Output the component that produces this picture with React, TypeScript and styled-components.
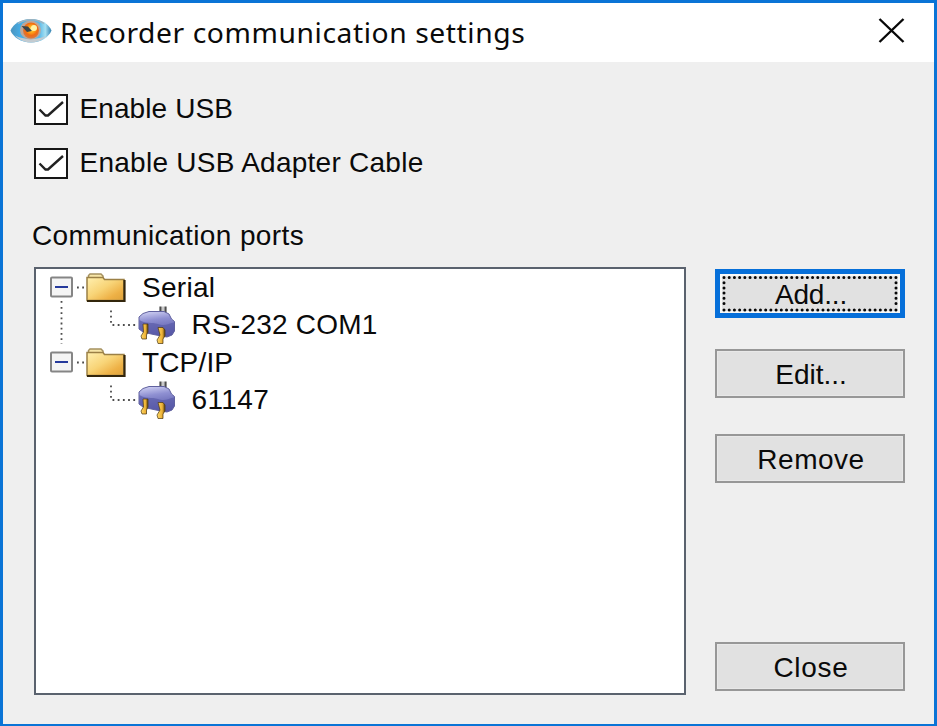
import React from 'react';
import styled, { createGlobalStyle } from 'styled-components';

const GlobalStyle = createGlobalStyle`
  *, *::before, *::after { box-sizing: border-box; }
  body { margin: 0; overflow: hidden; }
`;

const Dialog = styled.main`
  display: flex;
  flex-direction: column;
  width: 937px;
  height: 726px;
  border: solid #0a74d6;
  border-width: 3px 3px 2px 3px;
  background: #efefef;
  color: #0a0a0a;
  font: 28px/32px "Liberation Sans", Arial, sans-serif;
`;

const TitleBar = styled.header`
  display: flex;
  align-items: center;
  flex: none;
  height: 59px;
  padding: 0 29px 4px 7px;
  background: #fff;
`;

const Title = styled.h1`
  flex: 1;
  margin: 5px 0 0 7.5px;
  font: 400 27px/36px "Noto Sans", "Open Sans", sans-serif;
  letter-spacing: 0.55px;
  white-space: nowrap;
  transform: scaleX(1.046);
  transform-origin: left center;
`;

const CloseIcon = styled.button`
  display: flex;
  padding: 0;
  border: 0;
  background: none;
`;

const Options = styled.section`
  display: flex;
  flex-direction: column;
  gap: 22px;
  padding: 31px 0 0 31px;
`;

const Option = styled.label`
  display: flex;
  align-items: center;
  height: 32px;
  gap: 11.5px;
`;

const OptionText = styled.span<{ $spacing?: number }>`
  letter-spacing: ${(p) => p.$spacing ?? 0}px;
  white-space: nowrap;
`;

const GroupLabel = styled.h2`
  margin: 41px 0 0 29px;
  font: inherit;
  letter-spacing: 0.4px;
`;

const PortsArea = styled.section`
  display: flex;
  gap: 29px;
  margin: 15px 0 0 31px;
  height: 428px;
`;

const Tree = styled.div`
  width: 652px;
  height: 428px;
  border: 2px solid #5a626e;
  background: #fff;
`;

const TreeRow = styled.div`
  display: flex;
  align-items: center;
  height: 37.5px;
`;

const TreeText = styled.span<{ $spacing?: number }>`
  margin-left: 16px;
  letter-spacing: ${(p) => p.$spacing ?? 0}px;
  white-space: nowrap;
`;

const Guide = styled.svg`
  flex: none;
  display: block;
`;

const Buttons = styled.div`
  display: flex;
  flex-direction: column;
  width: 190px;
  padding: 2px 0 4px;
`;

const Button = styled.button<{ $focused?: boolean; $gap?: number; $last?: boolean; $spacing?: number }>`
  position: relative;
  width: 190px;
  height: 49px;
  padding: 3px 0 0 2px;
  margin-top: ${(p) => (p.$last ? 'auto' : `${p.$gap ?? 0}px`)};
  border: ${(p) => (p.$focused ? '5px solid #066fd9' : '2px solid #979797')};
  box-shadow: inset 0 0 0 ${(p) => (p.$focused ? '2px #f8f8f6' : '1px #e8e8e8')};
  background: #e1e1e1;
  color: inherit;
  font: inherit;
  letter-spacing: ${(p) => p.$spacing ?? 0}px;
`;

const FocusRing = styled.svg`
  position: absolute;
  inset: 0;
`;

const EyeLogo = () => (
  <svg width="42" height="26" viewBox="0 0 42 26">
    <defs>
      <linearGradient id="eye" x1="0" y1="0" x2="1" y2="0">
        <stop offset="0" stopColor="#4b93bd" />
        <stop offset="0.25" stopColor="#45aee8" />
        <stop offset="0.7" stopColor="#5ab9e8" />
        <stop offset="0.85" stopColor="#a5e0f2" />
        <stop offset="1" stopColor="#2f7fb0" />
      </linearGradient>
      <radialGradient id="iris" cx="0.52" cy="0.42" r="0.55">
        <stop offset="0" stopColor="#fff6a0" />
        <stop offset="0.3" stopColor="#ffb31c" />
        <stop offset="0.7" stopColor="#f36a10" />
        <stop offset="1" stopColor="#d8783f" />
      </radialGradient>
    </defs>
    <path d="M0.5 12.500 C3 6 11 1 21 1 C31 1 39 6 41.5 12.500 C39 19 31 24.500 21 24.500 C11 24.500 3 19 0.500 12.500Z" fill="url(#eye)" />
    <path d="M5 17.500 C13 22 29 22 37 17.500 C32 22.500 27 24.500 21 24.500 C15 24.500 9 22 5 17.500Z" fill="#c3cbd0" />
    <path d="M8 5.500 C15 0.500 27 0.500 34 5.500" fill="none" stroke="#9fb3bf" strokeWidth="1.500" />
    <ellipse cx="20.500" cy="12" rx="10.500" ry="9.500" fill="#bba79b" />
    <circle cx="21" cy="12.500" r="8" fill="url(#iris)" />
    <path d="M11.500 8 L18 8.500 L22 13 L17 14Z" fill="#39444a" />
    <circle cx="24" cy="10" r="3" fill="#fff3a6" />
  </svg>
);

const Checkbox = () => (
  <svg width="34" height="31" viewBox="0 0 34 31">
    <rect x="1" y="1" width="32" height="29" fill="#fff" stroke="#161616" strokeWidth="2" />
    <path d="M5.500 15.500 L11.500 21.500 H14 L29 8" fill="none" stroke="#222" strokeWidth="2.400" />
  </svg>
);

const FolderIcon = () => (
  <svg width="40" height="30" viewBox="0 0 40 30">
    <defs>
      <linearGradient id="folder" x1="0" y1="0" x2="1" y2="1">
        <stop offset="0" stopColor="#fff0b0" />
        <stop offset="0.45" stopColor="#f8d477" />
        <stop offset="0.75" stopColor="#eeb146" />
        <stop offset="1" stopColor="#dda13a" />
      </linearGradient>
    </defs>
    <path d="M2.500 5 V2.500 L4 1 H15 L17 3 V5" fill="#f7e6a8" stroke="#a59160" strokeWidth="1.500" />
    <path d="M1 4.500 H17 L18.500 6.500 H38 V27.500 H1Z" fill="url(#folder)" stroke="#9b8046" strokeWidth="1.500" />
    <path d="M1 28 H38.500 V7" fill="none" stroke="#33260c" strokeWidth="2.200" />
  </svg>
);

const PlugIcon = () => (
  <svg width="38" height="38" viewBox="0 0 38 38">
    <defs>
      <linearGradient id="plug" x1="0.200" y1="0" x2="0.400" y2="1">
        <stop offset="0" stopColor="#cfd0f2" />
        <stop offset="0.35" stopColor="#8f90d2" />
        <stop offset="1" stopColor="#5253a4" />
      </linearGradient>
      <linearGradient id="prong" x1="0" y1="0" x2="1" y2="0">
        <stop offset="0" stopColor="#ffdb6a" />
        <stop offset="0.65" stopColor="#edb135" />
        <stop offset="1" stopColor="#5c430f" />
      </linearGradient>
    </defs>
    <path d="M22.500 8 V0.500 M27.500 8 V0.500" stroke="#4d4d4d" strokeWidth="2.200" />
    <path d="M25 7 V0.500" stroke="#c9c9c9" strokeWidth="2" />
    <path d="M1 11 L5 7.500 L11 5.500 H26 L31 8 L33.500 13 L36.500 15.500 V25 L34 29 L29 31 L18 29 L11 27.500 L5 26 L1 23Z" fill="url(#plug)" stroke="#60619f" strokeWidth="1" />
    <path d="M1.500 14 C7 18 14 16 20 18 C27 21 31 17 36 16.500 V25 L33.500 28.500 L29 30.500 L18 28.500 L5 25.500 L1.500 23Z" fill="#5a5ba8" opacity="0.700" />
    <path d="M5 18 H10 V26 L8.500 29 V33 H4 L3 30 L5.500 26Z" fill="url(#prong)" stroke="#4a3510" strokeWidth="0.700" />
    <path d="M20 21.500 H25 L27 24 V30 L25 33 V37.500 H20 L19 34 L22 29Z" fill="url(#prong)" stroke="#4a3510" strokeWidth="0.700" />
  </svg>
);

const dots = { stroke: '#4c4c4c', strokeWidth: 1.8, strokeDasharray: '1.8 3.4' };

const BranchGuide = ({ first }: { first?: boolean }) => (
  <Guide width="50" height="37.5" viewBox="0 0 50 37.5">
    {first && <path d="M25.500 32 V36" {...dots} />}
    <path d="M41 18.500 H50" {...dots} />
    <rect x="15" y="8.500" width="21" height="19" rx="1" fill="#f4f4f4" stroke="#858585" strokeWidth="2" />
    <path d="M19 18 H32" stroke="#263a9c" strokeWidth="2" />
  </Guide>
);

const LeafGuide = ({ trunk }: { trunk?: boolean }) => (
  <Guide width="101.5" height="37.5" viewBox="0 0 101.5 37.5">
    {trunk && <path d="M25.500 0 V37.500" {...dots} />}
    <path d="M75 3.500 V16" {...dots} />
    <path d="M76.500 18 H100" {...dots} />
  </Guide>
);

export default function App() {
  return (
    <>
      <GlobalStyle />
      <Dialog>
        <TitleBar>
          <EyeLogo />
          <Title>Recorder communication settings</Title>
          <CloseIcon aria-label="Close window">
            <svg width="27" height="25" viewBox="0 0 27 25">
              <path d="M1.500 1 L25.500 24 M25.500 1 L1.500 24" stroke="#080808" strokeWidth="2.400" />
            </svg>
          </CloseIcon>
        </TitleBar>
        <Options>
          <Option><Checkbox /><OptionText $spacing={0.1}>Enable USB</OptionText></Option>
          <Option><Checkbox /><OptionText $spacing={0.26}>Enable USB Adapter Cable</OptionText></Option>
        </Options>
        <GroupLabel>Communication ports</GroupLabel>
        <PortsArea>
          <Tree>
            <TreeRow><BranchGuide first /><FolderIcon /><TreeText $spacing={0.3}>Serial</TreeText></TreeRow>
            <TreeRow><LeafGuide trunk /><PlugIcon /><TreeText $spacing={0.22}>RS-232 COM1</TreeText></TreeRow>
            <TreeRow><BranchGuide /><FolderIcon /><TreeText $spacing={0.15}>TCP/IP</TreeText></TreeRow>
            <TreeRow><LeafGuide /><PlugIcon /><TreeText $spacing={0.4}>61147</TreeText></TreeRow>
          </Tree>
          <Buttons>
            <Button $focused $spacing={-0.2}>
              Add...
              <FocusRing width="180" height="39" viewBox="0 0 180 39">
                <path
                  d="M4 3.500 H176 M4 36 H176 M4 8.700 V33 M176 8.700 V33"
                  fill="none"
                  stroke="#080808"
                  strokeWidth="3"
                  strokeLinecap="round"
                  strokeDasharray="0 5.210"
                />
              </FocusRing>
            </Button>
            <Button $gap={31}>Edit...</Button>
            <Button $gap={36} $spacing={0.5}>Remove</Button>
            <Button $last $spacing={0.7}>Close</Button>
          </Buttons>
        </PortsArea>
      </Dialog>
    </>
  );
}
